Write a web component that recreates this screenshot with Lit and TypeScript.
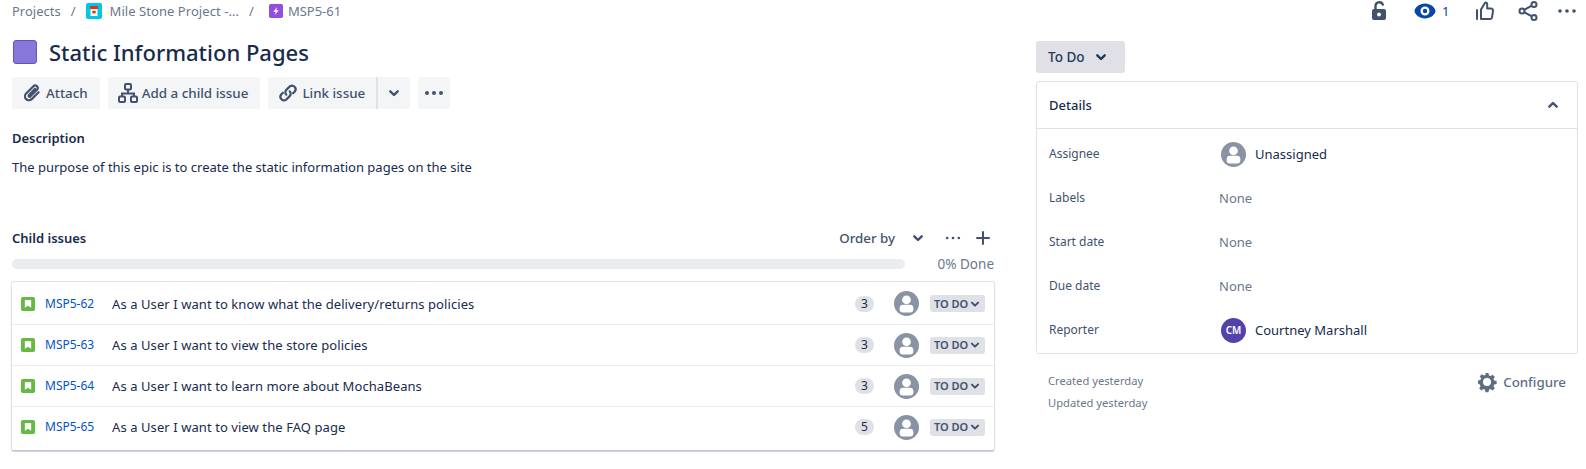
import { LitElement, html, css, svg } from 'lit';
import { customElement } from 'lit/decorators.js';

const chevronDown = (size = 24) => html`<svg width=${size} height=${size} viewBox="0 0 24 24"><path d="M8.300 10.300l3.700 3.700 3.700-3.700" fill="none" stroke="currentColor" stroke-width="2.400" stroke-linecap="round" stroke-linejoin="round"/></svg>`;

const dots = (r = 2, size = 24) => html`<svg width=${size} height=${size} viewBox="0 0 24 24"><g fill="currentColor"><circle cx="5" cy="12" r=${r}/><circle cx="12" cy="12" r=${r}/><circle cx="19" cy="12" r=${r}/></g></svg>`;

const unknownAvatar = html`<svg class="avatar" width="25" height="25" viewBox="0 0 24 24"><circle cx="12" cy="12" r="12" fill="#8993a4"/><circle cx="12" cy="8.400" r="4.200" fill="#fff"/><path d="M5.400 16.500a3.400 3.400 0 0 1 3.400-3.300h6.400a3.400 3.400 0 0 1 3.400 3.300v.8a3.300 3.300 0 0 1-3.300 3.400H8.700a3.300 3.300 0 0 1-3.300-3.400z" fill="#fff"/></svg>`;

const storyIcon = html`<svg width="14" height="14" viewBox="0 0 16 16"><rect width="16" height="16" rx="2" fill="#65ba43"/><path d="M5 3.500h6a.6.6 0 0 1 .6.6v8.200L8 10l-3.600 2.300V4.100A.6.6 0 0 1 5 3.500z" fill="#fff"/></svg>`;

const icons = {
  attach: svg`<path d="M18.600 11.200l-6.900 6.900a3.900 3.900 0 0 1-5.600-5.500l7.600-7.600a2.500 2.500 0 0 1 3.500 3.500l-7 7a1 1 0 0 1-1.400-1.400l6.200-6.200" fill="none" stroke="currentColor" stroke-width="2.200" stroke-linecap="round"/>`,
  child: svg`<g fill="none" stroke="currentColor" stroke-width="2"><rect x="9" y="3" width="6" height="5.500" rx="1"/><rect x="3" y="15.500" width="6" height="5.500" rx="1"/><rect x="15" y="15.500" width="6" height="5.500" rx="1"/><path d="M12 8.500v4M6 15.500v-3h12v3"/></g>`,
  link: svg`<g fill="none" stroke="currentColor" stroke-width="2.200" stroke-linecap="round"><path d="M10.300 13.700a3.400 3.400 0 0 1 0-4.800l3.500-3.500a3.600 3.600 0 0 1 5 5.100l-1.700 1.700"/><path d="M13.700 10.300a3.400 3.400 0 0 1 0 4.800l-3.500 3.500a3.600 3.600 0 0 1-5-5.100l1.700-1.700"/></g>`,
};

const btnIcon = (p: unknown) => html`<svg width="24" height="24" viewBox="0 0 24 24">${p}</svg>`;

const issues = [
  { key: 'MSP5-62', summary: 'As a User I want to know what the delivery/returns policies', count: 3 },
  { key: 'MSP5-63', summary: 'As a User I want to view the store policies', count: 3 },
  { key: 'MSP5-64', summary: 'As a User I want to learn more about MochaBeans', count: 3 },
  { key: 'MSP5-65', summary: 'As a User I want to view the FAQ page', count: 5 },
];

@customElement('app-root')
export class AppRoot extends LitElement {
  static styles = css`
    :host {
      display: block;
      width: 1586px;
      height: 469px;
      overflow: hidden;
      background: #fff;
      color: #172b4d;
      font-family: 'Noto Sans', sans-serif;
      font-size: 13px;
      line-height: 20px;
    }
    * { box-sizing: border-box; }
    svg { display: block; flex: none; }

    .layout { display: flex; height: 100%; }
    .main { width: 1036px; padding: 1px 41px 0 12px; flex: none; }
    .side { width: 542px; flex: none; display: flex; flex-direction: column; }

    .crumbs { display: flex; align-items: center; height: 20px; color: #6b778c; }
    .sep { margin: 0 10px 0 10px; }
    .crumb-icon { margin: 0 8px 0 0; }
    .crumb-project { letter-spacing: 0.06px; }
    .sep-2 { margin: 0 15px 0 10px; }
    .crumb-icon-2 { margin-right: 5px; }

    .title-row { display: flex; align-items: center; gap: 12px; margin: 17px 0 0 1px; height: 28px; }
    .epic { width: 24px; height: 24px; border-radius: 3px; background: #8777d9; border: 1px solid #6554c0; }
    h1 { margin: 0; font-size: 22px; line-height: 28px; font-weight: 500; }

    .actions { display: flex; gap: 8px; margin-top: 11px; }
    .btn { display: flex; align-items: center; height: 32px; padding: 0 12px 0 8px; gap: 2px; background: #f4f5f7; border-radius: 3px; color: #42526e; font-weight: 500; font-size: 13.400px; }
    .group { display: flex; }
    .group .btn:first-child { border-radius: 3px 0 0 3px; border-right: 2px solid #dfe1e6; padding-right: 11px; }
    .group .btn:last-child { border-radius: 0 3px 3px 0; padding: 0 4px; width: 32px; }
    .btn.more { padding: 0 4px; }

    h2 { margin: 0; font-size: 13px; line-height: 20px; font-weight: 600; }
    .desc-label { margin-top: 19px; }
    .desc { margin: 9px 0 0; }

    .child-head { display: flex; align-items: center; height: 24px; margin-top: 49px; }
    .child-head h2 { flex: 1; }
    .order { display: flex; align-items: center; color: #42526e; font-weight: 500; font-size: 13.300px; gap: 11px; margin-right: 13px; }
    .head-dots { color: #42526e; margin-right: 8px; }
    .plus { color: #42526e; }

    .progress { display: flex; align-items: center; margin-top: 4px; height: 20px; }
    .track { width: 893px; height: 10px; border-radius: 5px; background: #ebecf0; }
    .pct { margin-left: auto; margin-right: 1px; color: #6b778c; font-size: 13.500px; }

    .list { margin: 7px 0 0 -1px; padding: 1px 0 3px; border: 1px solid #dfe1e6; border-bottom-color: #c1c7d0; border-radius: 3px; box-shadow: 0 1px 1px rgba(9, 30, 66, 0.2); }
    .row { display: flex; align-items: center; height: 41px; padding: 0 9px 0 9px; border-top: 1px solid #ebecf0; }
    .row:first-child { border-top: 0; }
    .key { width: 67px; margin-left: 10px; color: #0052cc; font-size: 12px; }
    .summary { flex: 1; font-size: 13px; letter-spacing: 0.08px; }
    .count { width: 19px; height: 16px; border-radius: 8px; background: #dfe1e6; font-size: 12px; line-height: 16px; text-align: center; }
    .row .avatar { margin: 0 11px 0 20px; }
    .lozenge { display: flex; align-items: center; justify-content: space-between; width: 55px; height: 17px; padding: 0 0 0 4px; background: #dfe1e6; border-radius: 3px; color: #42526e; font-size: 11px; font-weight: 600; white-space: nowrap; }
    .lozenge svg { margin-left: -3px; }

    .top-icons { display: flex; align-items: center; height: 22px; color: #42526e; }
    .lock { margin-left: 331px; }
    .eye { margin-left: 22px; color: #0747a6; }
    .eye-count { color: #0747a6; margin-left: 5px; font-size: 13px; }
    .thumb { margin-left: 24px; }
    .share { margin-left: 19px; }
    .top-dots { margin-left: 15px; }

    .status { display: flex; align-items: center; width: 89px; height: 32px; margin-top: 19px; padding-left: 12px; gap: 4px; background: #dfe1e6; border-radius: 3px; font-weight: 500; font-size: 13.500px; color: #253858; }
    .panel { margin-top: 8px; height: 273px; border: 1px solid #dfe1e6; border-radius: 3px; }
    .panel-head { display: flex; align-items: center; justify-content: space-between; height: 47px; padding: 0 12px; border-bottom: 1px solid #dfe1e6; font-weight: 500; }
    .panel-head svg { color: #42526e; transform: rotate(180deg); }
    .fields { padding-top: 3px; }
    .field { display: flex; align-items: center; height: 44px; padding-left: 12px; }
    .field-label { width: 170px; font-size: 12px; color: #42526e; }
    .field-value { display: flex; align-items: center; gap: 9px; }
    .field-value .avatar, .initials { margin-left: 2px; }
    .none { color: #6b778c; }
    .initials { display: flex; align-items: center; justify-content: center; width: 25px; height: 25px; border-radius: 50%; background: #5243aa; color: #fff; font-size: 10px; font-weight: 600; }

    .foot { display: flex; justify-content: space-between; padding: 16px 12px 0 12px; }
    .dates { font-size: 11.200px; line-height: 22px; color: #6b778c; }
    .configure { display: flex; align-items: center; gap: 4px; height: 24px; color: #5e6c84; font-weight: 500; font-size: 13.300px; }
  `;

  render() {
    return html`
      <div class="layout">
        <div class="main">
          <div class="crumbs">
            <span>Projects</span>
            <span class="sep">/</span>
            <svg class="crumb-icon" width="16" height="16" viewBox="0 0 16 16"><rect width="16" height="16" rx="2" fill="#00c7e6"/><path d="M4 3h8v3H4z" fill="#de350b"/><path d="M4.500 6h7v7h-7z" fill="#fff"/><rect x="6.300" y="7.800" width="3.400" height="2.600" fill="#de350b"/></svg>
            <span class="crumb-project">Mile Stone Project -...</span>
            <span class="sep-2">/</span>
            <svg class="crumb-icon-2" width="14" height="14" viewBox="0 0 16 16"><rect width="16" height="16" rx="2" fill="#904ee2"/><path d="M9 3.500L5 9h2.600L7 12.500 11 7H8.400z" fill="#fff"/></svg>
            <span>MSP5-61</span>
          </div>

          <div class="title-row">
            <div class="epic"></div>
            <h1>Static Information Pages</h1>
          </div>

          <div class="actions">
            <div class="btn">${btnIcon(icons.attach)}Attach</div>
            <div class="btn">${btnIcon(icons.child)}Add a child issue</div>
            <div class="group">
              <div class="btn">${btnIcon(icons.link)}Link issue</div>
              <div class="btn">${chevronDown()}</div>
            </div>
            <div class="btn more">${dots()}</div>
          </div>

          <h2 class="desc-label">Description</h2>
          <p class="desc">The purpose of this epic is to create the static information pages on the site</p>

          <div class="child-head">
            <h2>Child issues</h2>
            <div class="order">Order by ${chevronDown()}</div>
            <div class="head-dots">${dots(1.600, 20)}</div>
            <svg class="plus" width="24" height="24" viewBox="0 0 24 24"><path d="M12 6v12M6 12h12" stroke="currentColor" stroke-width="2" stroke-linecap="round"/></svg>
          </div>

          <div class="progress">
            <div class="track"></div>
            <span class="pct">0% Done</span>
          </div>

          <div class="list">
            ${issues.map(
              (issue) => html`
                <div class="row">
                  ${storyIcon}
                  <span class="key">${issue.key}</span>
                  <span class="summary">${issue.summary}</span>
                  <span class="count">${issue.count}</span>
                  ${unknownAvatar}
                  <span class="lozenge">TO DO ${chevronDown(20)}</span>
                </div>
              `,
            )}
          </div>
        </div>

        <div class="side">
          <div class="top-icons">
            <svg class="lock" width="24" height="24" viewBox="0 0 24 24"><path d="M8.500 11V7a3.800 3.800 0 0 1 7.300-1.400" fill="none" stroke="currentColor" stroke-width="2.400" stroke-linecap="round"/><path fill-rule="evenodd" d="M7 10h10a2 2 0 0 1 2 2v7a2 2 0 0 1-2 2H7a2 2 0 0 1-2-2v-7a2 2 0 0 1 2-2zM12 17.500a2 2 0 1 0 0-4 2 2 0 0 0 0 4z" fill="currentColor"/></svg>
            <svg class="eye" width="24" height="24" viewBox="0 0 24 24"><path fill-rule="evenodd" d="M12 4.500c5.500 0 10 3.800 10.500 7.500-.5 3.700-5 7.500-10.500 7.500S2 15.700 1.500 12C2 8.300 6.500 4.500 12 4.500zm0 12a4.500 4.500 0 1 0 0-9 4.500 4.500 0 0 0 0 9zm0-2.300a2.200 2.200 0 1 1 0-4.400 2.200 2.200 0 0 1 0 4.400z" fill="currentColor"/></svg>
            <span class="eye-count">1</span>
            <svg class="thumb" width="24" height="24" viewBox="0 0 24 24"><path d="M4 11v9M8 20V10.500l3.800-6.300c.6-1 2.400-.7 2.400.9V9.500h3.800a2 2 0 0 1 2 2.300l-1 6.500a2 2 0 0 1-2 1.700z" fill="none" stroke="currentColor" stroke-width="2" stroke-linejoin="round" stroke-linecap="round"/></svg>
            <svg class="share" width="24" height="24" viewBox="0 0 24 24"><g fill="none" stroke="currentColor" stroke-width="2"><circle cx="6" cy="12" r="2.500"/><circle cx="18" cy="5.500" r="2.500"/><circle cx="18" cy="18.500" r="2.500"/><path d="M8.200 10.800l7.600-4.100M8.200 13.200l7.600 4.100"/></g></svg>
            <div class="top-dots">${dots(1.800)}</div>
          </div>

          <div class="status">To Do ${chevronDown()}</div>

          <div class="panel">
            <div class="panel-head">Details ${chevronDown()}</div>
            <div class="fields">
              <div class="field">
                <div class="field-label">Assignee</div>
                <div class="field-value">${unknownAvatar}<span>Unassigned</span></div>
              </div>
              <div class="field"><div class="field-label">Labels</div><div class="field-value none">None</div></div>
              <div class="field"><div class="field-label">Start date</div><div class="field-value none">None</div></div>
              <div class="field"><div class="field-label">Due date</div><div class="field-value none">None</div></div>
              <div class="field">
                <div class="field-label">Reporter</div>
                <div class="field-value"><div class="initials">CM</div><span>Courtney Marshall</span></div>
              </div>
            </div>
          </div>

          <div class="foot">
            <div class="dates">Created yesterday<br />Updated yesterday</div>
            <div class="configure">
              <svg width="24" height="24" viewBox="0 0 24 24"><path fill-rule="evenodd" d="M10.500 3h3l.5 2.400 1.600.7 2.100-1.300 2.100 2.100-1.300 2.100.7 1.600 2.400.5v3l-2.400.5-.7 1.600 1.300 2.100-2.100 2.100-2.100-1.300-1.600.7-.5 2.400h-3l-.5-2.400-1.600-.7-2.100 1.300-2.100-2.100 1.300-2.100-.7-1.600L3 13.500v-3l2.400-.5.7-1.600-1.300-2.100 2.100-2.100 2.100 1.300 1.600-.7zM12 16a4 4 0 1 0 0-8 4 4 0 0 0 0 8z" fill="currentColor"/></svg>
              Configure
            </div>
          </div>
        </div>
      </div>
    `;
  }
}
